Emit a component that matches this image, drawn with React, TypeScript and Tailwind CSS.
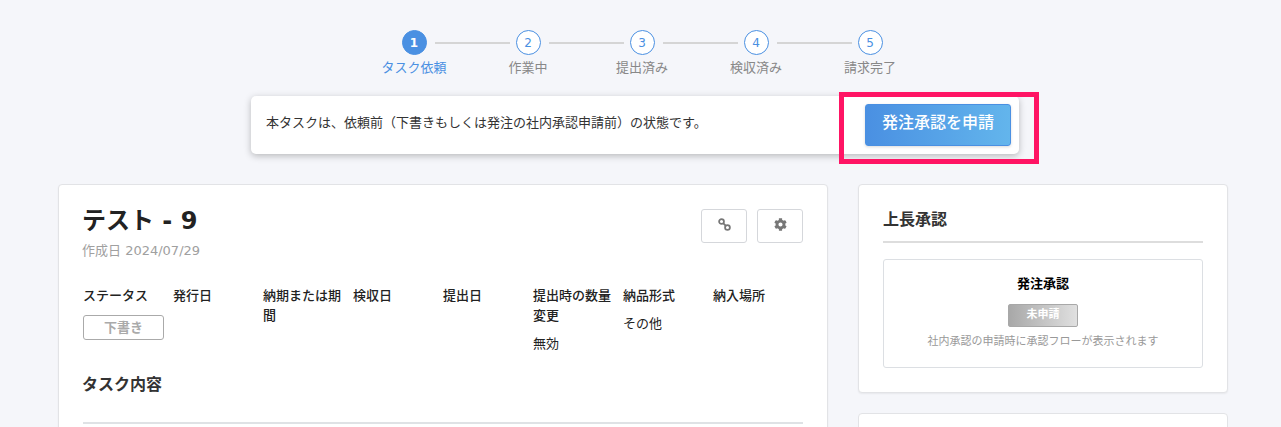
import React from "react";
import { FaCog } from "react-icons/fa";

const font = { fontFamily: '"DejaVu Sans", "Noto Sans CJK JP", sans-serif' };
const steps = ["タスク依頼", "作業中", "提出済み", "検収済み", "請求完了"];

function Stepper() {
  return (
    <div className="flex justify-center pt-[30px] pl-[3px] h-[96px]">
      {steps.map((s, i) => (
        <div key={s} className="relative w-[114px] flex flex-col items-center">
          <div
            className={
              i === 0
                ? "w-[25px] h-[25px] rounded-full bg-[#4a90e2] border border-[#4a90e2] text-white flex items-center justify-center text-[12px] font-bold"
                : "w-[25px] h-[25px] rounded-full bg-white border border-[#4a90e2] text-[#4a90e2] flex items-center justify-center text-[12px]"
            }
          >
            {i + 1}
          </div>
          <div className={i === 0 ? "mt-[3px] text-[13px] leading-[20px] text-[#4a90e2]" : "mt-[3px] text-[13px] leading-[20px] text-[#888888]"}>{s}</div>
          {i < 4 && <div className="absolute left-[78px] top-[12px] w-[75px] h-[2px] bg-[#d5d5d5]" />}
        </div>
      ))}
    </div>
  );
}

const cols: { h: string; body?: React.ReactNode }[] = [
  {
    h: "ステータス",
    body: (
      <div className="mt-[9px] w-[81px] h-[25px] rounded-[3px] border border-[#aaaaaa] text-[#aaaaaa] font-bold text-[13px] flex items-center justify-center">
        下書き
      </div>
    ),
  },
  { h: "発行日" },
  { h: "納期または期間" },
  { h: "検収日" },
  { h: "提出日" },
  { h: "提出時の数量変更", body: <div className="mt-[8px] text-[13px] leading-[20px]">無効</div> },
  { h: "納品形式", body: <div className="mt-[8px] text-[13px] leading-[20px]">その他</div> },
  { h: "納入場所" },
];

function LinkIcon() {
  return (
    <svg width="13" height="13" viewBox="0 0 14 14" fill="none" stroke="#777777" strokeWidth="1.9">
      <circle cx="3.8" cy="3.8" r="2.6" />
      <circle cx="10.2" cy="10.2" r="2.6" />
      <path d="M5.5 5.5L8.5 8.5" />
    </svg>
  );
}

export default function App() {
  return (
    <div className="relative h-[427px] overflow-hidden bg-[#f5f6fa] text-[#222222]" style={font}>
      <Stepper />

      <div className="w-[768px] h-[58px] ml-[251px] bg-white rounded-[5px] shadow-[0_2px_7px_rgba(0,0,0,0.25)] flex items-center justify-between pl-[15px] pr-[8px]">
        <span className="text-[13px] leading-[20px] mb-[5px] text-[#333333]">本タスクは、依頼前（下書きもしくは発注の社内承認申請前）の状態です。</span>
        <button className="w-[146px] h-[42px] rounded-[3px] border border-[#4a90e2] bg-gradient-to-r from-[#4a90e2] to-[#63b5ec] shadow-[0_1px_3px_rgba(0,0,0,0.15)] text-white text-[16px] font-medium leading-[36px] pb-[4px]">
          発注承認を申請
        </button>
      </div>

      <div className="absolute left-[839px] top-[92px] w-[200px] h-[72px] border-[5px] border-[#ff1464]" />

      <div className="flex gap-[30px] ml-[58px] mt-[30px] items-start">
        <div className="w-[770px] h-[300px] bg-white rounded-[4px] border border-[#e2e3e6] shadow-[0_1px_2px_rgba(0,0,0,0.06)] pt-[18px] px-[24px]">
          <div className="flex justify-between items-start">
            <div className="-ml-[1px]">
              <h1 className="text-[24px] leading-[36px] font-bold text-[#222222]">テスト - 9</h1>
              <div className="mt-[2px] text-[13px] leading-[20px] text-[#a0a0a0]">作成日 2024/07/29</div>
            </div>
            <div className="flex gap-[10px] mt-[6px]">
              <button className="w-[46px] h-[34px] rounded-[3px] border border-[#d5d7db] bg-white flex items-center justify-center pb-[4px]">
                <LinkIcon />
              </button>
              <button className="w-[46px] h-[34px] rounded-[3px] border border-[#d5d7db] bg-white flex items-center justify-center pb-[4px]">
                <FaCog className="w-[13px] h-[13px] text-[#777777]" />
              </button>
            </div>
          </div>

          <div className="grid grid-cols-[repeat(8,90px)] mt-[25px] h-[68px]">
            {cols.map((c) => (
              <div key={c.h} className="pr-[7px]">
                <div className="text-[13px] leading-[20px] font-medium text-[#222222]">{c.h}</div>
                {c.body}
              </div>
            ))}
          </div>

          <h2 className="mt-[19px] -ml-[1px] text-[16px] leading-[24px] font-bold text-[#333333]">タスク内容</h2>
          <div className="mt-[25px] h-[2px] bg-[#dfe2e5]" />
        </div>

        <div className="flex flex-col gap-[20px] w-[370px]">
          <div className="h-[209px] bg-white rounded-[4px] border border-[#e2e3e6] shadow-[0_1px_2px_rgba(0,0,0,0.06)] pt-[23px] px-[24px]">
            <h2 className="text-[16px] leading-[24px] font-bold text-[#333333]">上長承認</h2>
            <div className="mt-[9px] h-[2px] bg-[#dddddd]" />
            <div className="mt-[16px] h-[109px] rounded-[3px] border border-[#dcdfe3] flex flex-col items-center pt-[14px]">
              <div className="text-[13px] leading-[20px] font-bold text-black">発注承認</div>
              <div className="mt-[10px] w-[70px] h-[23px] rounded-[2px] border border-[#a8a8a8] bg-gradient-to-r from-[#a8a8a8] to-[#e0e0e0] text-white text-[11px] font-bold flex items-center justify-center">
                未申請
              </div>
              <div className="mt-[5px] text-[11px] leading-[20px] text-[#999999]">社内承認の申請時に承認フローが表示されます</div>
            </div>
          </div>
          <div className="h-[60px] bg-white rounded-[4px] border border-[#e2e3e6]" />
        </div>
      </div>
    </div>
  );
}
